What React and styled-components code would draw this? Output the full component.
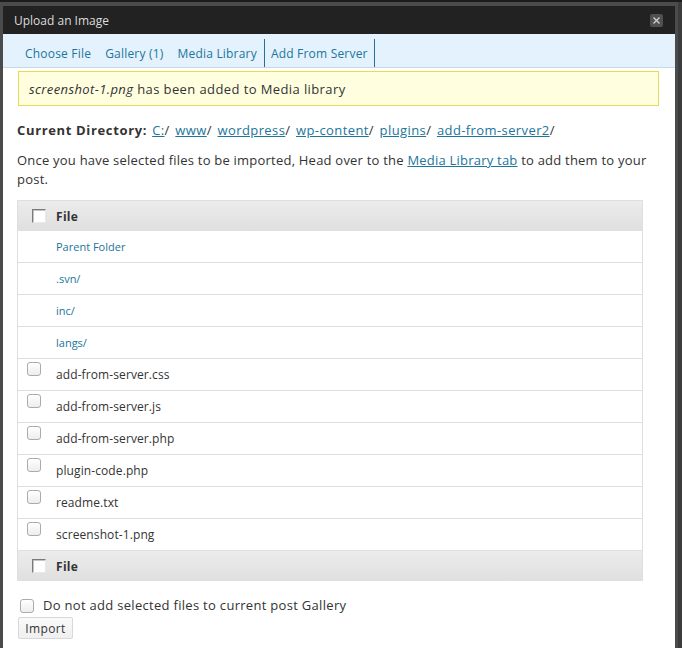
import React from "react";
import styled, { createGlobalStyle } from "styled-components";

const GlobalStyle = createGlobalStyle`
  html, body { margin: 0; padding: 0; background: #3c3c3c; }
  body { font-family: "Open Sans", "DejaVu Sans", sans-serif; color: #333; }
  * { box-sizing: border-box; }
`;

const Page = styled.div`
  height: 648px;
  border-top: 2px solid #1c1c1c;
  overflow: hidden;
`;

const Frame = styled.div`
  width: 678px;
  height: 646px;
  border-style: solid;
  border-color: #4b4b4b;
  border-width: 4px 3px 0 3px;
  background: #fff;
  display: flex;
  flex-direction: column;
`;

const TitleBar = styled.div`
  height: 28px;
  flex: none;
  background: #222;
  display: flex;
  align-items: center;
  justify-content: space-between;
  padding: 0 12px 0 11px;
`;

const Title = styled.span`
  color: #dcdcdc;
  font-size: 12px;
`;

const CloseButton = styled.button`
  width: 13px;
  height: 13px;
  padding: 0;
  border: 0;
  border-radius: 2px;
  background: #505050;
  display: flex;
  align-items: center;
  justify-content: center;
  margin-top: 1px;
`;

const TabBar = styled.div`
  height: 34px;
  flex: none;
  background: #e4f2fd;
  border-bottom: 1px solid #c6d9e9;
  display: flex;
  align-items: flex-end;
  padding-left: 15px;
`;

const Tab = styled.a`
  display: block;
  height: 28px;
  line-height: 29px;
  font-size: 12px;
  letter-spacing: 0.2px;
  color: #21759b;
  text-decoration: none;
  padding: 0 ${(p) => (p.$active ? "6px" : "7px")};
  border-left: ${(p) => (p.$active ? "1px solid #2a6f9a" : "0")};
  border-right: ${(p) => (p.$active ? "1px solid #2a6f9a" : "0")};
`;

const Notice = styled.div`
  margin: 3px 16px 0 15px;
  height: 35px;
  line-height: 34px;
  border: 1px solid #e6db55;
  background: #ffffe0;
  padding: 0 10px;
  font-size: 13px;
  letter-spacing: 0.4px;
  color: #333;
  em { font-style: italic; }
`;

const Content = styled.div`
  padding: 0 14px;
`;

const DirLine = styled.div`
  margin-top: 15px;
  line-height: 18px;
  font-size: 13px;
  color: #333;
  strong { font-weight: 700; margin-right: 5px; letter-spacing: 0.65px; }
`;

const Crumb = styled.a`
  color: #21759b;
  text-decoration: underline;
  letter-spacing: 0.4px;
`;

const Sep = styled.span`
  margin-right: 6px;
`;

const Para = styled.p`
  margin: 12px 0 0;
  font-size: 13px;
  line-height: 19px;
  letter-spacing: 0.22px;
  color: #333;
  a { color: #21759b; text-decoration: underline; }
`;

const Table = styled.div`
  margin-top: 11px;
  width: 626px;
  border: 1px solid #dfdfdf;
  border-bottom: 0;
`;

const HeadRow = styled.div`
  height: 30px;
  display: flex;
  align-items: center;
  padding-left: 14px;
  background: linear-gradient(to bottom, #ececec, #dfdfdf);
  font-size: 12px;
  font-weight: 700;
  color: #333;
  letter-spacing: 0.3px;
`;

const HeadCheck = styled.span`
  width: 14px;
  height: 14px;
  flex: none;
  background: #fff;
  border: 1px solid;
  border-color: #7a7a7a #e8e8e8 #e8e8e8 #7a7a7a;
  box-shadow: inset 1px 1px 0 #c4c4c4;
  margin-right: 10px;
  margin-top: -1px;
`;

const Row = styled.div`
  height: 32px;
  border-bottom: 1px solid #dfdfdf;
  display: flex;
  align-items: center;
  position: relative;
  padding-left: 38px;
  background: #fff;
`;

const RowCheck = styled.span`
  position: absolute;
  left: 9px;
  top: 3px;
  width: 14px;
  height: 14px;
  border: 1px solid #ababab;
  border-radius: 3px;
  background: linear-gradient(to bottom, #fff, #ededed);
`;

const FolderLink = styled.a`
  color: #21759b;
  font-size: 11px;
  text-decoration: none;
`;

const FileName = styled.span`
  color: #333;
  font-size: 12px;
  letter-spacing: 0.1px;
`;

const OptionRow = styled.label`
  margin-top: 17px;
  margin-left: 3px;
  height: 14px;
  display: flex;
  align-items: center;
  font-size: 13px;
  letter-spacing: 0.3px;
  color: #333;
`;

const OptionCheck = styled.span`
  width: 14px;
  height: 14px;
  flex: none;
  border: 1px solid #ababab;
  border-radius: 3px;
  background: linear-gradient(to bottom, #fff, #ededed);
  margin-right: 9px;
  margin-top: 2px;
`;

const ImportButton = styled.button`
  margin-top: 5px;
  margin-left: 1px;
  width: 55px;
  height: 22px;
  border: 1px solid #d8d8d8;
  border-radius: 2px;
  background: linear-gradient(to bottom, #fafafa, #f0f0f0);
  font-family: "Open Sans", "DejaVu Sans", sans-serif;
  font-size: 12px;
  color: #333;
  padding: 0;
  letter-spacing: 0.4px;
`;

const crumbs = ["C:", "www", "wordpress", "wp-content", "plugins", "add-from-server2"];
const folders = ["Parent Folder", ".svn/", "inc/", "langs/"];
const files = [
  "add-from-server.css",
  "add-from-server.js",
  "add-from-server.php",
  "plugin-code.php",
  "readme.txt",
  "screenshot-1.png",
];

export default function App() {
  return (
    <>
      <GlobalStyle />
      <Page>
        <Frame>
          <TitleBar>
            <Title>Upload an Image</Title>
            <CloseButton aria-label="Close">
              <svg width="9" height="9" viewBox="0 0 9 9">
                <path d="M1.5 1.5 L7.5 7.5 M7.5 1.5 L1.5 7.5" stroke="#d0d0d0" strokeWidth="1.3" />
              </svg>
            </CloseButton>
          </TitleBar>
          <TabBar>
            <Tab>Choose File</Tab>
            <Tab>Gallery (1)</Tab>
            <Tab>Media Library</Tab>
            <Tab $active>Add From Server</Tab>
          </TabBar>
          <Notice>
            <em>screenshot-1.png</em> has been added to Media library
          </Notice>
          <Content>
            <DirLine>
              <strong>Current Directory:</strong>
              {crumbs.map((c) => (
                <React.Fragment key={c}>
                  <Crumb>{c}</Crumb>
                  <Sep>/</Sep>
                </React.Fragment>
              ))}
            </DirLine>
            <Para>
              Once you have selected files to be imported, Head over to the <a>Media Library tab</a> to add them to your post.
            </Para>
            <Table>
              <HeadRow>
                <HeadCheck />
                File
              </HeadRow>
              {folders.map((f) => (
                <Row key={f}>
                  <FolderLink>{f}</FolderLink>
                </Row>
              ))}
              {files.map((f) => (
                <Row key={f}>
                  <RowCheck />
                  <FileName>{f}</FileName>
                </Row>
              ))}
              <HeadRow>
                <HeadCheck />
                File
              </HeadRow>
            </Table>
            <OptionRow>
              <OptionCheck />
              Do not add selected files to current post Gallery
            </OptionRow>
            <ImportButton>Import</ImportButton>
          </Content>
        </Frame>
      </Page>
    </>
  );
}
